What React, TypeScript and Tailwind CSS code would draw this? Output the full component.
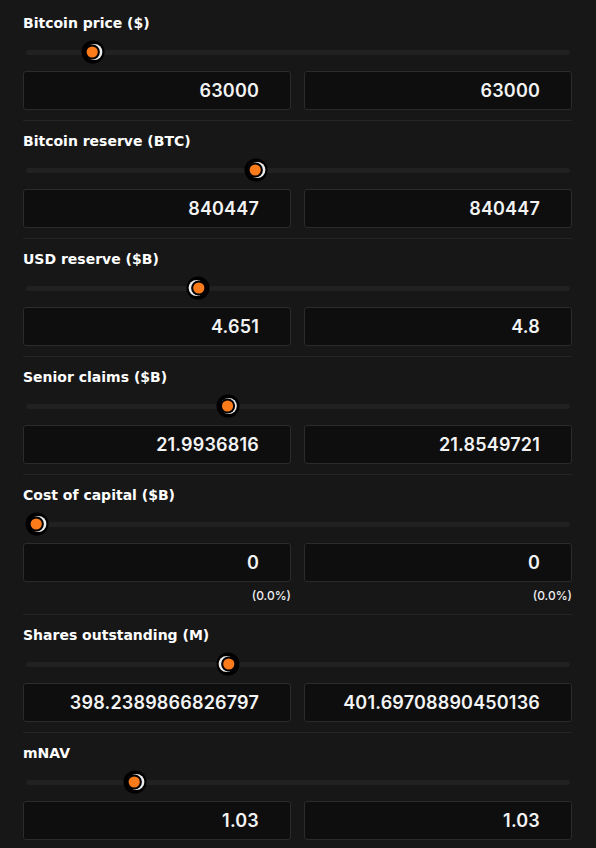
const rows = [
  { label: 'Bitcoin price ($)', thumb: 93, dir: 1, a: '63000', b: '63000' },
  { label: 'Bitcoin reserve (BTC)', thumb: 256, dir: 1, a: '840447', b: '840447' },
  { label: 'USD reserve ($B)', thumb: 198, dir: -1, a: '4.651', b: '4.8' },
  { label: 'Senior claims ($B)', thumb: 228, dir: 0.6, a: '21.9936816', b: '21.8549721' },
  { label: 'Cost of capital ($B)', thumb: 37, dir: 1, a: '0', b: '0', pa: '(0.0%)', pb: '(0.0%)' },
  { label: 'Shares outstanding (M)', thumb: 228, dir: -1, a: '398.2389866826797', b: '401.69708890450136' },
  { label: 'mNAV', thumb: 135, dir: 1, a: '1.03', b: '1.03' },
];

function Thumb({ left, dir }: { left: number; dir: number }) {
  const d = 2 * dir;
  return (
    <svg
      width="24"
      height="24"
      viewBox="0 0 24 24"
      className="absolute top-1/2 -translate-y-1/2"
      style={{ left: left - 12 - 26 }}
    >
      <circle cx="12" cy="12" r="11.5" fill="#000" />
      <circle cx={12 + d * 0.7} cy="12" r="8" fill="#ececec" />
      <circle cx={12 - d * 0.3} cy="12" r="7.5" fill="#000" />
      <circle cx={12 - d * 0.4} cy="12" r="5.6" fill="#fb7a1a" />
    </svg>
  );
}

function ValueBox({ value }: { value: string }) {
  return (
    <div className="h-[39px] rounded-[3px] border border-[#2b2b2b] bg-[#0e0e0e] flex items-center justify-end pr-[31px] text-[18px] font-semibold text-[#f3f3f3] tracking-[0.01em]">
      {value}
    </div>
  );
}

export default function App() {
  return (
    <div
      className="min-h-screen bg-[#171717] pt-[3px] pl-[23px] pr-[24px]"
      style={{ fontFamily: 'Inter, "Noto Sans", sans-serif' }}
    >
      {rows.map((r, i) => (
        <div
          key={r.label}
          className={`pt-[10px] pb-[10px] ${i < rows.length - 1 ? 'border-b border-[#242424]' : ''}`}
        >
          <div
            className="h-5 leading-5 text-[14px] font-bold text-white"
            style={{ fontFamily: '"DejaVu Sans", Inter, sans-serif' }}
          >
            {r.label}
          </div>
          <div className="mt-2 h-[22px] relative flex items-center ml-[3px] mr-[2px]">
            <div className="w-full h-[5px] rounded-full bg-[#212121]" />
            <Thumb left={r.thumb} dir={r.dir} />
          </div>
          <div className="mt-2 grid grid-cols-2 gap-[13px]">
            <div>
              <ValueBox value={r.a} />
              {r.pa && <div className="mt-[6px] h-4 leading-4 text-right text-[12px] font-medium text-[#f0f0f0]">{r.pa}</div>}
            </div>
            <div>
              <ValueBox value={r.b} />
              {r.pb && <div className="mt-[6px] h-4 leading-4 text-right text-[12px] font-medium text-[#f0f0f0]">{r.pb}</div>}
            </div>
          </div>
        </div>
      ))}
    </div>
  );
}
